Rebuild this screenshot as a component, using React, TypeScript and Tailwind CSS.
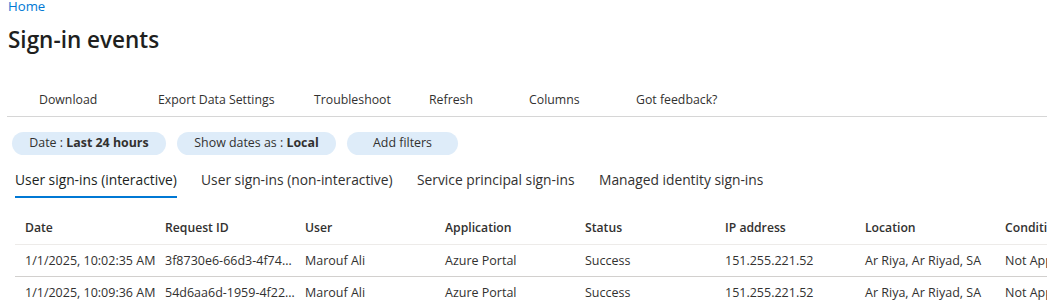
import React from 'react';

// Sign-in events page (Entra admin style)

const toolbar = [
  { label: 'Download', w: 'w-[119px]' },
  { label: 'Export Data Settings', w: 'w-[156px]' },
  { label: 'Troubleshoot', w: 'w-[115px]' },
  { label: 'Refresh', w: 'w-[100px]' },
  { label: 'Columns', w: 'w-[107px]' },
  { label: 'Got feedback?', w: 'w-[120px]' },
];

const tabs = [
  { label: 'User sign-ins (interactive)', w: 'w-[186px]', active: true },
  { label: 'User sign-ins (non-interactive)', w: 'w-[216px]', active: false },
  { label: 'Service principal sign-ins', w: 'w-[182px]', active: false },
  { label: 'Managed identity sign-ins', w: 'w-[200px]', active: false },
];

const columns = ['Date', 'Request ID', 'User', 'Application', 'Status', 'IP address', 'Location', 'Conditional Access'];

const rows = [
  ['1/1/2025, 10:02:35 AM', '3f8730e6-66d3-4f74…', 'Marouf Ali', 'Azure Portal', 'Success', '151.255.221.52', 'Ar Riya, Ar Riyad, SA', 'Not Applied'],
  ['1/1/2025, 10:09:36 AM', '54d6aa6d-1959-4f22…', 'Marouf Ali', 'Azure Portal', 'Success', '151.255.221.52', 'Ar Riya, Ar Riyad, SA', 'Not Applied'],
];

function Pill({ children, w }: { children: React.ReactNode; w: string }) {
  return (
    <div className={`${w} h-[23px] rounded-full bg-[#deecf9] flex items-center justify-center text-[12.4px] text-[#323130]`}>
      {children}
    </div>
  );
}

export default function App() {
  return (
    <div
      className="w-[1062px] h-[305px] overflow-hidden bg-white text-[#323130]"
      style={{ fontFamily: '"Segoe UI", "Open Sans", sans-serif' }}
    >
      {/* Breadcrumb + title */}
      <div className="pl-2 -mt-[3px] text-[13.2px] leading-[18px] text-[#0078d4]">Home</div>
      <h1 className="pl-2 mt-[11px] text-[22.5px] leading-[28px] font-semibold text-[#201f1e]">Sign-in events</h1>

      {/* Command bar */}
      <div className="mt-[27px] mx-[7px] w-[1040px] h-[36px] pt-[4px] border-b border-[#d6d6d6] flex items-center">
        <div className="w-[32px]" />
        {toolbar.map((t) => (
          <div key={t.label} className={`${t.w} text-[12.3px] text-[#323130] whitespace-nowrap`}>
            {t.label}
          </div>
        ))}
      </div>

      {/* Filter pills */}
      <div className="mt-[15px] ml-3 flex gap-[11px]">
        <Pill w="w-[154px]">
          Date :&nbsp;<span className="font-bold">Last 24 hours</span>
        </Pill>
        <Pill w="w-[159px]">
          Show dates as :&nbsp;<span className="font-bold">Local</span>
        </Pill>
        <Pill w="w-[111px]">Add filters</Pill>
      </div>

      {/* Tabs */}
      <div className="mt-[14px] ml-[15px] flex h-[29px]">
        {tabs.map((t) => (
          <div key={t.label} className={`${t.w} flex`}>
            <div
              className={`h-full text-[13.8px] leading-[22px] whitespace-nowrap ${
                t.active ? 'border-b-2 border-[#0078d4] text-[#201f1e]' : 'border-b-2 border-transparent text-[#323130]'
              }`}
            >
              {t.label}
            </div>
          </div>
        ))}
      </div>

      {/* Grid */}
      <div className="mt-[15px] ml-[15px] w-[1032px] overflow-hidden">
        <div className="flex h-[32px] items-center border-b border-[#edebe9] w-max">
          {columns.map((c) => (
            <div key={c} className="w-[140px] pl-[10px] text-[12.2px] font-semibold whitespace-nowrap">
              {c}
            </div>
          ))}
        </div>
        {rows.map((r, i) => (
          <div key={i} className="flex h-[32px] pt-[2px] items-center border-b border-[#d2d0ce] w-max">
            {r.map((v, j) => (
              <div key={j} className="w-[140px] pl-[10px] text-[12.5px] whitespace-nowrap">
                {v}
              </div>
            ))}
          </div>
        ))}
      </div>
    </div>
  );
}
